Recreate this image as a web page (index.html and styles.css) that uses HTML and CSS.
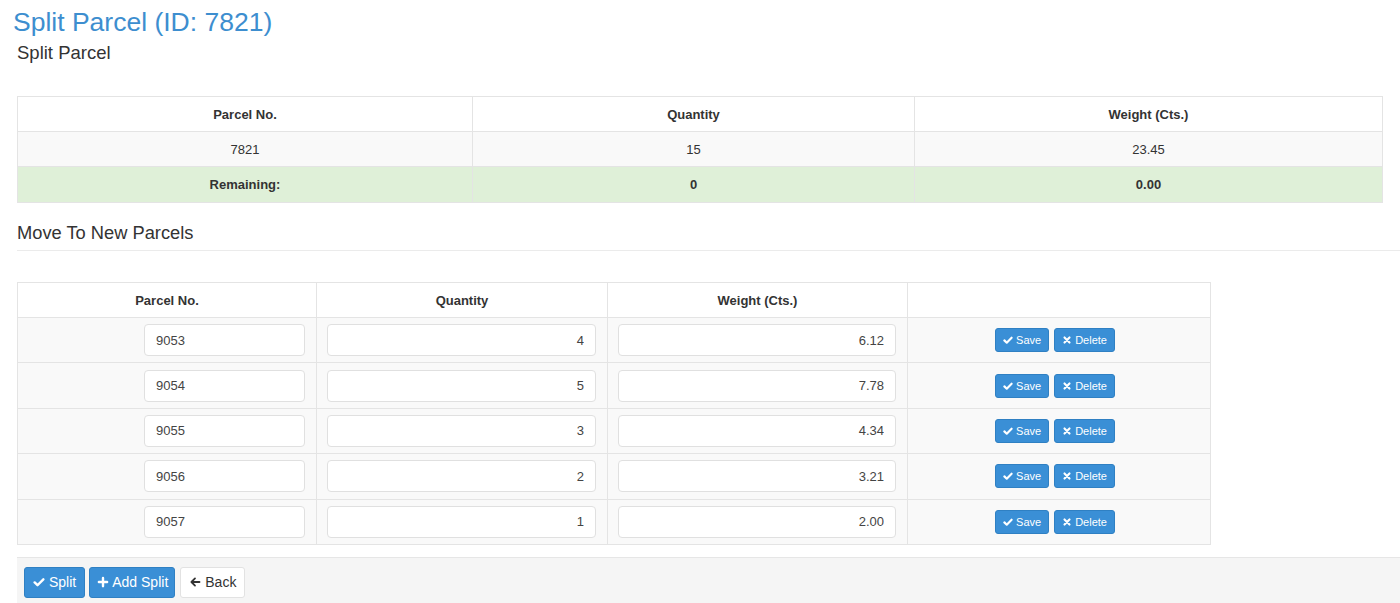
FILE: index.html
```html
<!DOCTYPE html>
<html>
<head>
<meta charset="utf-8">
<title>Split Parcel</title>
<link rel="stylesheet" href="styles.css">
</head>
<body>
<div class="page">
  <h1 class="title">Split Parcel (ID: 7821)</h1>
  <div class="content">
    <h2 class="subtitle">Split Parcel</h2>
    <table class="summary">
      <colgroup><col class="c1"><col class="c2"><col class="c3"></colgroup>
      <thead>
        <tr><th>Parcel No.</th><th>Quantity</th><th>Weight (Cts.)</th></tr>
      </thead>
      <tbody>
        <tr class="striped"><td>7821</td><td>15</td><td>23.45</td></tr>
        <tr class="success"><th>Remaining:</th><th>0</th><th>0.00</th></tr>
      </tbody>
    </table>

    <h3 class="section">Move To New Parcels</h3>
    <div class="divider"></div>

    <table class="splits">
      <colgroup><col class="s1"><col class="s2"><col class="s3"><col class="s4"></colgroup>
      <thead>
        <tr><th>Parcel No.</th><th>Quantity</th><th>Weight (Cts.)</th><th></th></tr>
      </thead>
      <tbody>
        <tr>
          <td class="cell-parcel"><input class="field field-parcel" value="9053"></td>
          <td><input class="field field-num" value="4"></td>
          <td><input class="field field-num" value="6.12"></td>
          <td class="actions"><button class="btn btn-sm"><svg class="ico" viewBox="0 0 16 16"><path d="M2.2 8.6L6 12.3L13.8 4.4"/></svg>Save</button><button class="btn btn-sm"><svg class="ico" viewBox="0 0 16 16"><path d="M4 4L12 12M12 4L4 12"/></svg>Delete</button></td>
        </tr>
        <tr>
          <td class="cell-parcel"><input class="field field-parcel" value="9054"></td>
          <td><input class="field field-num" value="5"></td>
          <td><input class="field field-num" value="7.78"></td>
          <td class="actions"><button class="btn btn-sm"><svg class="ico" viewBox="0 0 16 16"><path d="M2.2 8.6L6 12.3L13.8 4.4"/></svg>Save</button><button class="btn btn-sm"><svg class="ico" viewBox="0 0 16 16"><path d="M4 4L12 12M12 4L4 12"/></svg>Delete</button></td>
        </tr>
        <tr>
          <td class="cell-parcel"><input class="field field-parcel" value="9055"></td>
          <td><input class="field field-num" value="3"></td>
          <td><input class="field field-num" value="4.34"></td>
          <td class="actions"><button class="btn btn-sm"><svg class="ico" viewBox="0 0 16 16"><path d="M2.2 8.6L6 12.3L13.8 4.4"/></svg>Save</button><button class="btn btn-sm"><svg class="ico" viewBox="0 0 16 16"><path d="M4 4L12 12M12 4L4 12"/></svg>Delete</button></td>
        </tr>
        <tr>
          <td class="cell-parcel"><input class="field field-parcel" value="9056"></td>
          <td><input class="field field-num" value="2"></td>
          <td><input class="field field-num" value="3.21"></td>
          <td class="actions"><button class="btn btn-sm"><svg class="ico" viewBox="0 0 16 16"><path d="M2.2 8.6L6 12.3L13.8 4.4"/></svg>Save</button><button class="btn btn-sm"><svg class="ico" viewBox="0 0 16 16"><path d="M4 4L12 12M12 4L4 12"/></svg>Delete</button></td>
        </tr>
        <tr>
          <td class="cell-parcel"><input class="field field-parcel" value="9057"></td>
          <td><input class="field field-num" value="1"></td>
          <td><input class="field field-num" value="2.00"></td>
          <td class="actions"><button class="btn btn-sm"><svg class="ico" viewBox="0 0 16 16"><path d="M2.2 8.6L6 12.3L13.8 4.4"/></svg>Save</button><button class="btn btn-sm"><svg class="ico" viewBox="0 0 16 16"><path d="M4 4L12 12M12 4L4 12"/></svg>Delete</button></td>
        </tr>
      </tbody>
    </table>
  </div>

  <div class="footer">
    <button class="btn btn-lg"><svg class="ico" viewBox="0 0 16 16"><path d="M2.2 8.6L6 12.3L13.8 4.4"/></svg>Split</button>
    <button class="btn btn-lg btn-add"><svg class="ico" viewBox="0 0 16 16"><path d="M8 2.5V13.5M2.5 8H13.5"/></svg>Add Split</button>
    <button class="btn btn-lg btn-default"><svg class="ico" viewBox="0 0 16 16"><path d="M8 3.2L3.2 8L8 12.8M3.6 8H14"/></svg>Back</button>
  </div>
</div>
</body>
</html>
```

FILE: styles.css
```css
html, body {
  margin: 0;
  padding: 0;
  background: #ffffff;
}

body {
  font-family: "Liberation Sans", Arial, Helvetica, sans-serif;
  color: #333333;
}

.page {
  width: 1400px;
  height: 603px;
  overflow: hidden;
}

.title {
  margin: 7px 0 0 13px;
  font-size: 26.5px;
  line-height: 30px;
  font-weight: normal;
  color: #3d8ecf;
}

.content {
  padding-left: 17px;
}

.subtitle {
  margin: 6px 0 0;
  font-size: 18.5px;
  line-height: 20px;
  font-weight: normal;
  color: #333333;
}

/* Summary table */
.summary {
  margin-top: 33px;
  width: 1365px;
  border-collapse: collapse;
  font-size: 13px;
  table-layout: fixed;
}

.summary .c1 { width: 455px; }
.summary .c2 { width: 442px; }
.summary .c3 { width: 468px; }

.summary th,
.summary td {
  border: 1px solid #e4e4e4;
  height: 34px;
  padding: 0 8px;
  text-align: center;
  vertical-align: middle;
}

.summary th {
  font-weight: bold;
}

.summary thead th {
  background: #ffffff;
}

.summary .striped td {
  background: #f9f9f9;
}

.summary .success th {
  background: #dff0d8;
  height: 35px;
}

.section {
  margin: 20px 0 0;
  font-size: 18.3px;
  line-height: 20px;
  font-weight: normal;
  color: #333333;
}

.divider {
  margin-top: 7px;
  border-top: 1px solid #ebebeb;
}

/* Splits table */
.splits {
  margin-top: 31px;
  width: 1193px;
  border-collapse: collapse;
  table-layout: fixed;
  font-size: 13px;
}

.splits .s1 { width: 299px; }
.splits .s2 { width: 291px; }
.splits .s3 { width: 300px; }
.splits .s4 { width: 303px; }

.splits th,
.splits td {
  border: 1px solid #e4e4e4;
  vertical-align: middle;
}

.splits thead th {
  height: 34px;
  padding: 0;
  text-align: center;
  font-weight: bold;
  background: #ffffff;
}

.splits tbody td {
  height: 44.4px;
  padding: 0 11px 0 10px;
  background: #f9f9f9;
}

.splits .cell-parcel {
  text-align: right;
}

.field {
  box-sizing: border-box;
  height: 32px;
  border: 1px solid #e0e0e0;
  border-radius: 4px;
  background: #ffffff;
  font-family: "Liberation Sans", Arial, Helvetica, sans-serif;
  font-size: 13px;
  color: #444444;
  padding: 0 11px;
  margin: 0;
  display: block;
  outline: none;
}

.field-parcel {
  width: 161px;
  margin-left: auto;
  text-align: left;
}

.field-num {
  width: 100%;
  text-align: right;
}

.splits tbody td.actions {
  text-align: center;
  padding: 0 18px 0 10px;
}

/* Buttons */
.btn {
  display: inline-flex;
  align-items: center;
  justify-content: center;
  box-sizing: border-box;
  border: 1px solid #2f80c3;
  border-radius: 3px;
  background: #3a8fd6;
  color: #ffffff;
  font-family: "Liberation Sans", Arial, Helvetica, sans-serif;
  margin: 0;
  cursor: pointer;
  vertical-align: middle;
}

.btn .ico {
  fill: none;
  stroke: currentColor;
  stroke-linecap: round;
  stroke-linejoin: round;
}

.btn-sm {
  height: 24px;
  padding: 0 7px;
  font-size: 11px;
  gap: 3px;
}

.btn-sm + .btn-sm {
  margin-left: 5px;
}

.btn-sm .ico {
  width: 10px;
  height: 10px;
  stroke-width: 3.4;
}

.footer {
  margin: 12px 0 0 17px;
  border-top: 1px solid #e6e6e6;
  background: #f5f5f5;
  padding: 9px 0 10px 7px;
  display: flex;
  gap: 4px;
  height: 60px;
}

.btn-lg {
  height: 31px;
  padding: 0 8px;
  font-size: 14px;
  gap: 4px;
}

.btn-lg .ico {
  width: 12px;
  height: 12px;
  stroke-width: 3.2;
}

.btn-add {
  padding: 0 6px 0 7px;
  gap: 3px;
}

.btn-default {
  margin-left: 1px;
  background: #ffffff;
  border-color: #e2e2e2;
  color: #333333;
}

.btn-default .ico {
  stroke-width: 2.4;
}
```
